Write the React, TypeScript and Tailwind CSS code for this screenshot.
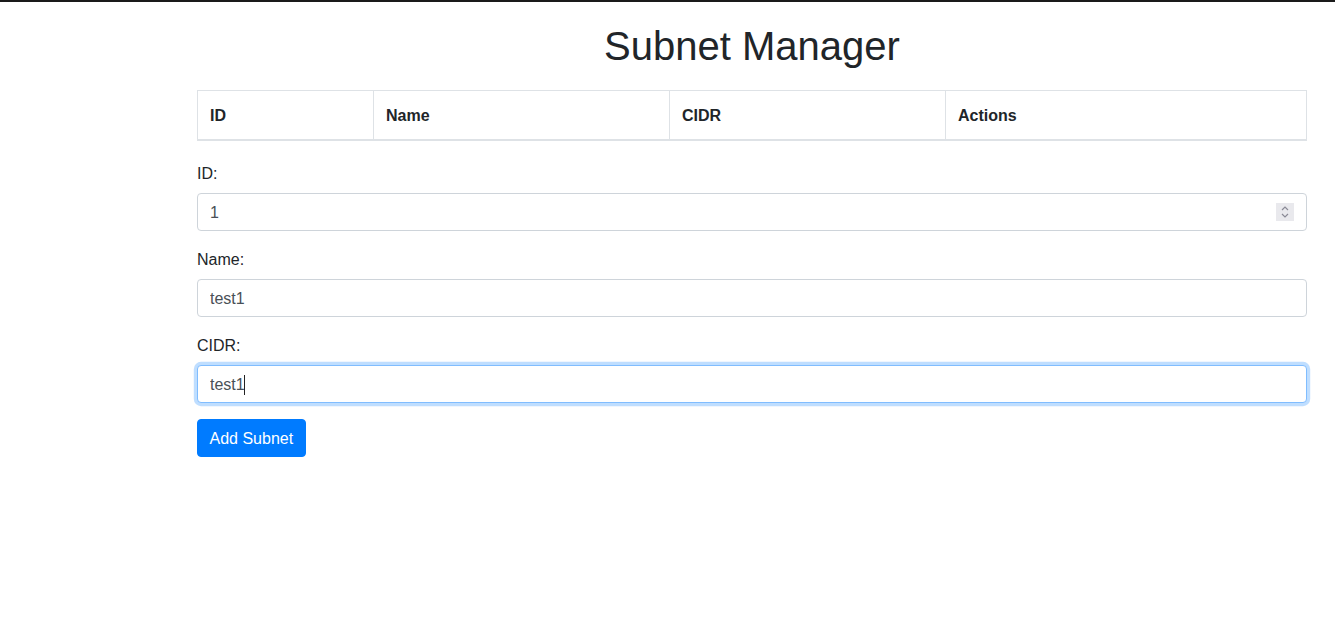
const columns = [
  { label: "ID", width: "w-[176px]" },
  { label: "Name", width: "w-[296px]" },
  { label: "CIDR", width: "w-[276px]" },
  { label: "Actions", width: "" },
];

function Field({
  label,
  value,
  focused,
  spinner,
}: {
  label: string;
  value: string;
  focused?: boolean;
  spinner?: boolean;
}) {
  return (
    <div className="mb-4">
      <label className="mb-2 block h-6 pt-px leading-6">{label}</label>
      <div className="relative">
        <input
          type="text"
          defaultValue={value}
          className={
            focused
              ? "block h-[38px] w-full rounded border border-[#80bdff] bg-white px-3 pt-[2px] text-base leading-6 text-[#495057] shadow-[0_0_0_3.2px_rgba(0,123,255,0.25)] outline-none"
              : "block h-[38px] w-full rounded border border-[#ced4da] bg-white px-3 pt-[2px] text-base leading-6 text-[#495057] outline-none"
          }
        />
        {focused && (
          <span className="pointer-events-none absolute left-[47px] top-[10px] h-[20px] w-px bg-[#222]" />
        )}
        {spinner && (
          <span className="pointer-events-none absolute right-[13px] top-[10px] flex h-[18px] w-[18px] flex-col items-center justify-center bg-[#e9e9ed]">
            <svg width="10" height="14" viewBox="0 0 10 14" fill="none" stroke="#8a8a96" strokeWidth="1.2">
              <path d="M2 5 L5 2 L8 5" />
              <path d="M2 9 L5 12 L8 9" />
            </svg>
          </span>
        )}
      </div>
    </div>
  );
}

export default function App() {
  return (
    <div className="min-h-screen border-t-2 border-[#1a1a1a] bg-white font-['Liberation_Sans',Arial,sans-serif] text-base text-[#212529]">
      <div className="ml-[197px] w-[1110px]">
        <h1 className="mt-5 mb-5 text-center text-[40px] leading-[48px] font-normal">
          Subnet Manager
        </h1>

        <table className="mb-5 w-full border-collapse border border-[#dee2e6]">
          <thead>
            <tr>
              {columns.map((col) => (
                <th
                  key={col.label}
                  className={`${col.width} border border-b-2 border-[#dee2e6] px-3 pt-[13px] pb-[11px] text-left font-bold leading-6`}
                >
                  {col.label}
                </th>
              ))}
            </tr>
          </thead>
          <tbody />
        </table>

        <form>
          <Field label="ID:" value="1" spinner />
          <Field label="Name:" value="test1" />
          <Field label="CIDR:" value="test1" focused />
          <button
            type="button"
            className="h-[38px] rounded border border-[#007bff] bg-[#007bff] px-[11.5px] pt-[2px] text-base leading-6 text-white"
          >
            Add Subnet
          </button>
        </form>
      </div>
    </div>
  );
}
